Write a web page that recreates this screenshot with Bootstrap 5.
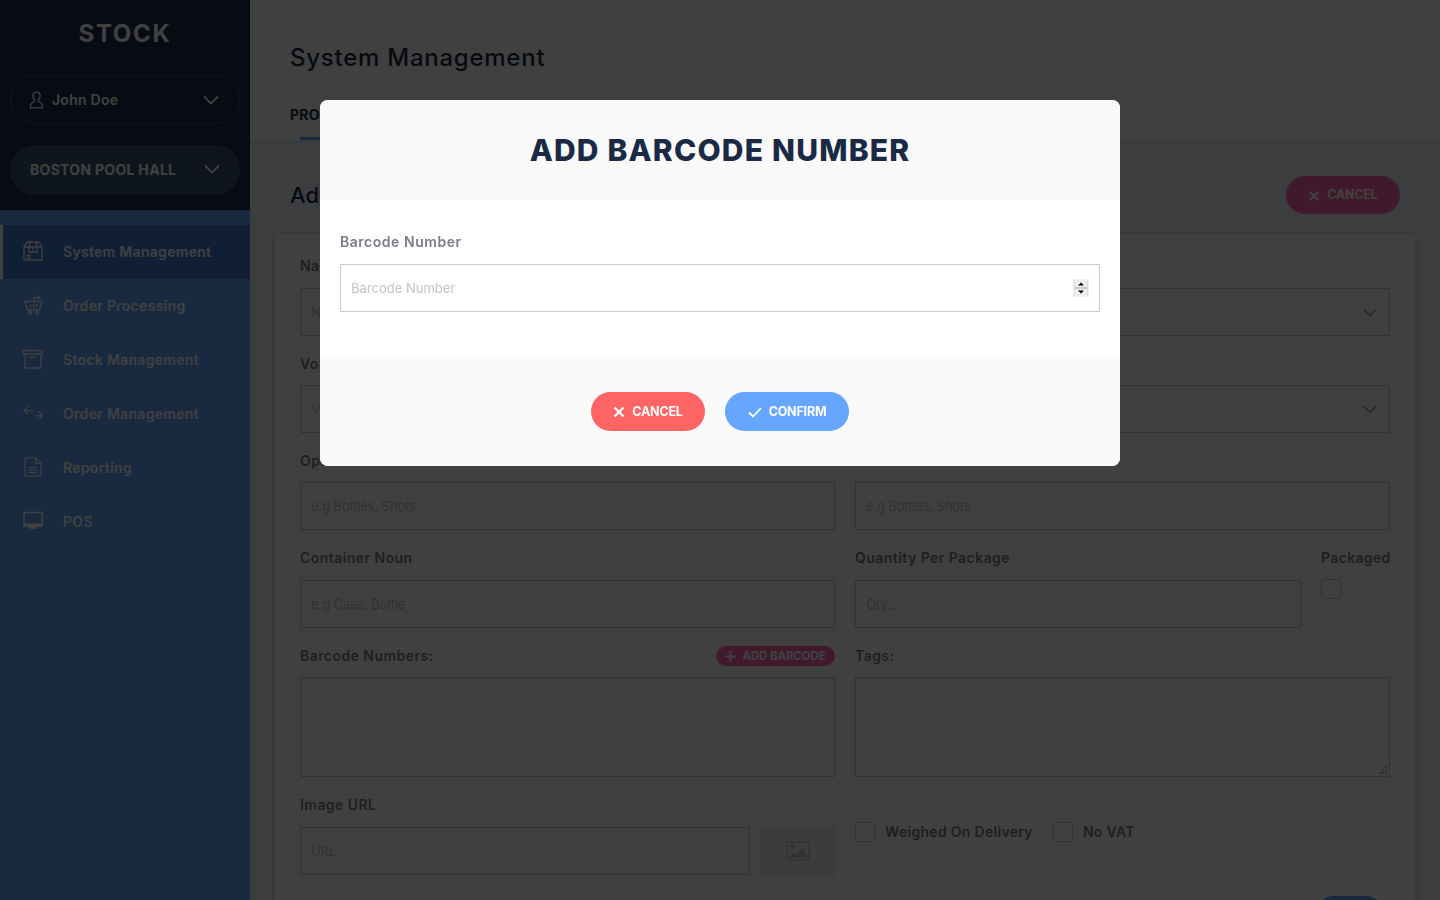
<!DOCTYPE html>
<html lang="en">
<head>
  <meta charset="UTF-8">
  <title>System Management – Stock</title>
  <meta name="viewport" content="width=device-width, initial-scale=1">
  <link href="https://cdn.jsdelivr.net/npm/bootstrap@5.3.0/dist/css/bootstrap.min.css" rel="stylesheet">
  <style>
    body { height: 900px; overflow: hidden; background: #f0f4f7; font-family: Inter, "Noto Sans", sans-serif; font-size: 14px; color: #7a7d88; }
    svg { display: block; flex: none; fill: none; stroke: currentColor; }

    /* sidebar */
    .side { width: 250px; height: 900px; flex: none; background: #66a6ff; color: #fff; }
    .side-top { height: 210px; background: #1c3350; padding: 0 10px; }
    .logo { height: 75px; padding-top: 19px; text-align: center; font-size: 24px; line-height: 30px; font-weight: 700; letter-spacing: 1.7px; }
    .user-pill { height: 49px; border: 1px solid #3c5a80; border-radius: 25px; padding: 0 20px 0 18px; font-weight: 600; letter-spacing: .25px; }
    .venue-pill { height: 50px; margin-top: 21px; background: #3c5675; border-radius: 25px; padding: 0 20px 2px; font-weight: 700; letter-spacing: .3px; }
    .side-nav { padding-top: 15px; }
    .side-link { height: 54px; padding: 0 0 2px 20px; gap: 20px; color: #fff; text-decoration: none; font-weight: 600; letter-spacing: .3px; border-left: 3px solid transparent; }
    .side-link.current { background: #407cd6; border-left-color: #fff; }
    .side-icon { width: 20px; }

    /* main */
    .page { flex: 1; min-width: 0; }
    .page-top { height: 140px; background: #fff; padding: 40px 40px 0; box-shadow: 0 1px 4px rgba(0,0,0,.08); }
    .page-title { font-size: 24px; line-height: 36px; font-weight: 500; color: #1a2a44; letter-spacing: .75px; margin: 0; }
    .tab-link { display: block; width: fit-content; margin-top: 27px; height: 37px; line-height: 24px; padding-right: 20px; font-weight: 700; color: #1a2a44; letter-spacing: .3px; position: relative; }
    .tab-link::after { content: ""; position: absolute; left: 10px; right: 0; top: 34px; height: 3px; background: #66a6ff; }
    .page-body { padding: 36px 25px 0; }
    .sub-title { height: 38px; padding: 0 15px; }
    .sub-title h2 { font-size: 22px; font-weight: 500; color: #1a2a44; margin: 0; }
    .pill-back { width: 114px; height: 38px; background: #ff6aa6; color: #fff; border: 0; font-size: 12.5px; font-weight: 700; letter-spacing: -.2px; gap: 7px; padding: 1px 0 0; }
    .form-sheet { margin-top: 20px; background: #fff; padding: 21.2px 25px 0; box-shadow: 0 0 10px rgba(0,0,0,.12); height: 700px; }
    .form-sheet .row { --bs-gutter-x: 20px; }
    .fgroup { margin-bottom: 17px; }
    .flabel { display: block; height: 21px; line-height: 21px; margin-bottom: 11.4px; font-weight: 600; color: #7a7d88; letter-spacing: .45px; white-space: nowrap; }
    .finput { height: 48px; border: 1px solid #ccc; border-radius: 0; padding: 0 10px; font-size: 13px; background-color: #fff; }
    .finput::placeholder { color: #c4c4c4; }
    .form-sheet .finput::placeholder { letter-spacing: -.15px; }
    .fselect { background: #fff; padding: 2px 12px 0 0; }
    .farea { height: 100px; resize: none; }
    .grip-wrap { position: relative; }
    .grip-dots { position: absolute; right: 3px; bottom: 2px; color: #bbb; stroke: none; }
    .pill-add { width: 119px; height: 20px; margin-top: 2px; background: #ff6aa6; color: #fff; font-size: 11.5px; font-weight: 700; letter-spacing: -.1px; gap: 6px; }
    .tick-box { width: 20px; height: 20px; flex: none; border: 1px solid #ccc; border-radius: 3px; background: #fff; }
    .pack-col { width: 69px; flex: none; }
    .pack-col .flabel { height: 20px; margin-bottom: 11.4px; letter-spacing: .35px; }
    .url-line { gap: 10px; }
    .thumb-box { width: 75px; height: 50px; flex: none; background: #f0f0f0; color: #c8c8c8; margin-top: -1px; }
    .check-line { margin-top: 27px; }
    .check-line .flabel { margin: 0 20px 0 10px; letter-spacing: .3px; }
    .save-btn { width: 70px; height: 38px; background: #66a6ff; border-radius: 19px; margin-left: auto; margin-right: 5px; margin-top: 20px; }

    /* dialog */
    .modal-backdrop.show { opacity: .75; background: #000; }
    .modal-dialog.code-dialog { max-width: 800px; width: 800px; margin: 100px auto 0; }
    .code-dialog .modal-content { border: 0; border-radius: 8px; overflow: hidden; }
    .code-head { height: 100px; background: #f9f9f9; border: 0; border-radius: 0; padding: 0; justify-content: center; }
    .code-head h1 { font-size: 30px; font-weight: 800; color: #1a2a44; letter-spacing: 1.2px; margin: 0; }
    .code-body { height: 157px; padding: 31px 20px 0; flex: none; }
    .code-body .flabel { margin-bottom: 12px; letter-spacing: .53px; }
    .code-body .finput::-webkit-inner-spin-button { display: none; }
    .spin-box { position: absolute; right: 11px; top: 15px; stroke: none; }
    .code-foot { height: 109px; background: #fafafa; border: 0; border-radius: 0; padding: 0; gap: 20px; justify-content: center; align-items: flex-start; }
    .code-foot .btn { height: 39px; margin: 35px 0 0; padding: 1px 0 0; border: 0; color: #fff; font-size: 12.5px; font-weight: 700; letter-spacing: -.2px; }
    .btn-stop { width: 114px; background: #ff6565; gap: 7px; }
    .btn-ok { width: 124px; background: #66a6ff; gap: 7px; }
  </style>
</head>
<body class="d-flex">

  <!-- Sidebar -->
  <div class="side">
    <div class="side-top">
      <div class="logo">STOCK</div>
      <div class="user-pill d-flex align-items-center">
        <svg width="15" height="18" viewBox="0 0 15 18" stroke-width="1.3"><path d="M7.5 1.2c-2.2 0-3.6 1.7-3.6 3.8 0 1.7.8 3.2 1.9 4 .1.9-.4 1.5-1.3 2-1.6.8-3 1.7-3 3.5v2.3h12v-2.3c0-1.8-1.4-2.7-3-3.5-.9-.5-1.4-1.1-1.3-2 1.1-.8 1.9-2.3 1.9-4 0-2.1-1.4-3.8-3.6-3.8z"/></svg>
        <span class="ms-2">John Doe</span>
        <svg class="ms-auto" width="16" height="10" viewBox="0 0 16 10" stroke-width="1.8"><path d="M1 1.5l7 7 7-7"/></svg>
      </div>
      <div class="venue-pill d-flex align-items-center justify-content-between">
        <span>BOSTON POOL HALL</span>
        <svg width="16" height="10" viewBox="0 0 16 10" stroke-width="1.8"><path d="M1 1.5l7 7 7-7"/></svg>
      </div>
    </div>
    <nav class="side-nav">
      <a class="side-link current d-flex align-items-center" href="#">
        <svg class="side-icon" height="20" viewBox="0 0 20 20" stroke-width="1.3"><path d="M4 1h12l3 5v13H1V6zM1 6h18M7 1L6 6v5h8V6l-1-5M10 6v3M3.5 14.5h4M3.5 17h4"/></svg>
        System Management
      </a>
      <a class="side-link d-flex align-items-center" href="#">
        <svg class="side-icon" height="20" viewBox="0 0 20 20" stroke-width="1.3"><path d="M2 6.500h17L16.500 15H4.500zM7.500 9v3.500M10.500 9v3.500M13.500 9v3.500M11 6V2.500h6M15 .8l2.200 1.700L15 4.200"/><circle cx="7" cy="17.800" r="1.400"/><circle cx="14" cy="17.800" r="1.400"/></svg>
        Order Processing
      </a>
      <a class="side-link d-flex align-items-center" href="#">
        <svg class="side-icon" height="20" viewBox="0 0 20 20" stroke-width="1.3"><path d="M.5 1.500h19v3.500H.5zM2 5v14h16V5M7 8.500h6"/></svg>
        Stock Management
      </a>
      <a class="side-link d-flex align-items-center" href="#">
        <svg class="side-icon" height="20" viewBox="0 0 21 20" stroke-width="1.3"><path d="M5 3.500L1 7.500l4 3.500M1 7.500h10M17 9l4 4-4 4M21 13h-9"/></svg>
        Order Management
      </a>
      <a class="side-link d-flex align-items-center" href="#">
        <svg class="side-icon" height="20" viewBox="0 0 20 20" stroke-width="1.2"><path d="M2 1h10.500L18 6.500V19H2zM12.500 1v5.500H18M5.500 10.500h9M5.500 13h9M5.500 15.500h9"/></svg>
        Reporting
      </a>
      <a class="side-link d-flex align-items-center" href="#">
        <svg class="side-icon" height="20" viewBox="0 0 20 20" stroke-width="1.5"><path d="M1 1.500h18v13H1z"/><path fill="currentColor" stroke="none" d="M.3 12.500h19.400v2.800a.7.7 0 0 1-.7.7H1a.7.7 0 0 1-.7-.7zM6.500 16h7v1.800h-7z"/></svg>
        POS
      </a>
    </nav>
  </div>

  <!-- Page behind the dialog -->
  <div class="page">
    <div class="page-top">
      <h1 class="page-title">System Management</h1>
      <span class="tab-link">PRODUCTS</span>
    </div>
    <div class="page-body">
      <div class="sub-title d-flex align-items-center justify-content-between">
        <h2>Add Product</h2>
        <button class="btn pill-back rounded-pill d-flex align-items-center justify-content-center">
          <svg width="12" height="12" viewBox="0 0 12 12" stroke-width="2.2"><path d="M1.500 1.500l9 9M10.500 1.500l-9 9"/></svg>
          CANCEL
        </button>
      </div>
      <div class="form-sheet">
        <div class="row">
          <div class="col-6 fgroup"><label class="flabel">Name</label><input class="form-control finput" placeholder="Name"></div>
          <div class="col-6 fgroup"><label class="flabel">Category</label>
            <div class="form-control finput fselect d-flex align-items-center justify-content-end"><svg width="14" height="9" viewBox="0 0 14 9" stroke-width="1.5" color="#999"><path d="M1 1.500l6 6 6-6"/></svg></div>
          </div>
          <div class="col-6 fgroup"><label class="flabel">Volume</label><input class="form-control finput" placeholder="Volume"></div>
          <div class="col-6 fgroup"><label class="flabel">Supplier</label>
            <div class="form-control finput fselect d-flex align-items-center justify-content-end"><svg width="14" height="9" viewBox="0 0 14 9" stroke-width="1.5" color="#999"><path d="M1 1.500l6 6 6-6"/></svg></div>
          </div>
          <div class="col-6 fgroup"><label class="flabel">Optic Noun</label><input class="form-control finput" placeholder="e.g Bottles, Shots"></div>
          <div class="col-6 fgroup"><label class="flabel">&nbsp;</label><input class="form-control finput" placeholder="e.g Bottles, Shots"></div>
          <div class="col-6 fgroup"><label class="flabel">Container Noun</label><input class="form-control finput" placeholder="e.g Case, Bottle"></div>
          <div class="col-6 fgroup d-flex gap-3">
            <div class="flex-grow-1"><label class="flabel">Quantity Per Package</label><input class="form-control finput" placeholder="Qty..."></div>
            <div class="pack-col ms-1"><label class="flabel">Packaged</label><div class="tick-box"></div></div>
          </div>
          <div class="col-6 fgroup">
            <div class="flabel d-flex align-items-center justify-content-between">
              <span>Barcode Numbers:</span>
              <span class="pill-add rounded-pill d-flex align-items-center justify-content-center">
                <svg width="11" height="11" viewBox="0 0 11 11" stroke-width="1.8"><path d="M5.500 0v11M0 5.500h11"/></svg>
                ADD BARCODE
              </span>
            </div>
            <div class="form-control finput farea"></div>
          </div>
          <div class="col-6 fgroup"><label class="flabel">Tags:</label>
            <div class="grip-wrap">
              <textarea class="form-control finput farea"></textarea>
              <svg class="grip-dots" width="8" height="9" viewBox="0 0 8 9"><path fill="currentColor" d="M6 0h2v2H6zM3 3h2v2H3zM6 3h2v2H6zM0 6h2v2H0zM3 6h2v2H3zM6 6h2v2H6z"/></svg>
            </div>
          </div>
          <div class="col-6">
            <label class="flabel">Image URL</label>
            <div class="d-flex url-line align-items-start">
              <input class="form-control finput" placeholder="URL">
              <div class="thumb-box d-flex align-items-center justify-content-center">
                <svg width="24" height="20" viewBox="0 0 24 20" stroke-width="1.5"><path d="M1 1h22v18H1z"/><circle cx="6" cy="6" r="2.200" fill="currentColor" stroke="none"/><path fill="currentColor" stroke="none" d="M3 17l5-5 3 2 5-7 5 7v3z"/></svg>
              </div>
            </div>
          </div>
          <div class="col-6">
            <div class="d-flex align-items-center check-line">
              <div class="tick-box"></div><span class="flabel">Weighed On Delivery</span>
              <div class="tick-box"></div><span class="flabel">No VAT</span>
            </div>
          </div>
          <div class="col-12 d-flex"><div class="save-btn"></div></div>
        </div>
      </div>
    </div>
  </div>

  <!-- Add barcode dialog -->
  <div class="modal-backdrop show"></div>
  <div class="modal d-block" tabindex="-1">
    <div class="modal-dialog code-dialog">
      <div class="modal-content">
        <div class="modal-header code-head">
          <h1>ADD BARCODE NUMBER</h1>
        </div>
        <div class="modal-body code-body">
          <label class="flabel" for="barcode-number">Barcode Number</label>
          <div class="position-relative">
            <input id="barcode-number" type="number" class="form-control finput" placeholder="Barcode Number">
            <svg class="spin-box" width="16" height="18" viewBox="0 0 16 18">
              <path fill="#f0f0f0" d="M0 0h16v18H0z"/>
              <path fill="#dcdcdc" d="M1 1h1v16H1zM14 1h1v16h-1z"/>
              <path fill="#c8c8c8" d="M2 8h12v2H2z"/>
              <path fill="#000" d="M8 3.500l3 3H5zM5 11.500h6l-3 3z"/>
            </svg>
          </div>
        </div>
        <div class="modal-footer code-foot">
          <button class="btn btn-stop rounded-pill d-flex align-items-center justify-content-center">
            <svg width="12" height="12" viewBox="0 0 12 12" stroke-width="2.2"><path d="M1.500 1.500l9 9M10.500 1.500l-9 9"/></svg>
            CANCEL
          </button>
          <button class="btn btn-ok rounded-pill d-flex align-items-center justify-content-center">
            <svg width="14" height="11" viewBox="0 0 14 11" stroke-width="1.8"><path d="M1 5.500l4 4 8-8.500"/></svg>
            CONFIRM
          </button>
        </div>
      </div>
    </div>
  </div>

  <script src="https://cdn.jsdelivr.net/npm/bootstrap@5.3.0/dist/js/bootstrap.bundle.min.js"></script>
</body>
</html>
